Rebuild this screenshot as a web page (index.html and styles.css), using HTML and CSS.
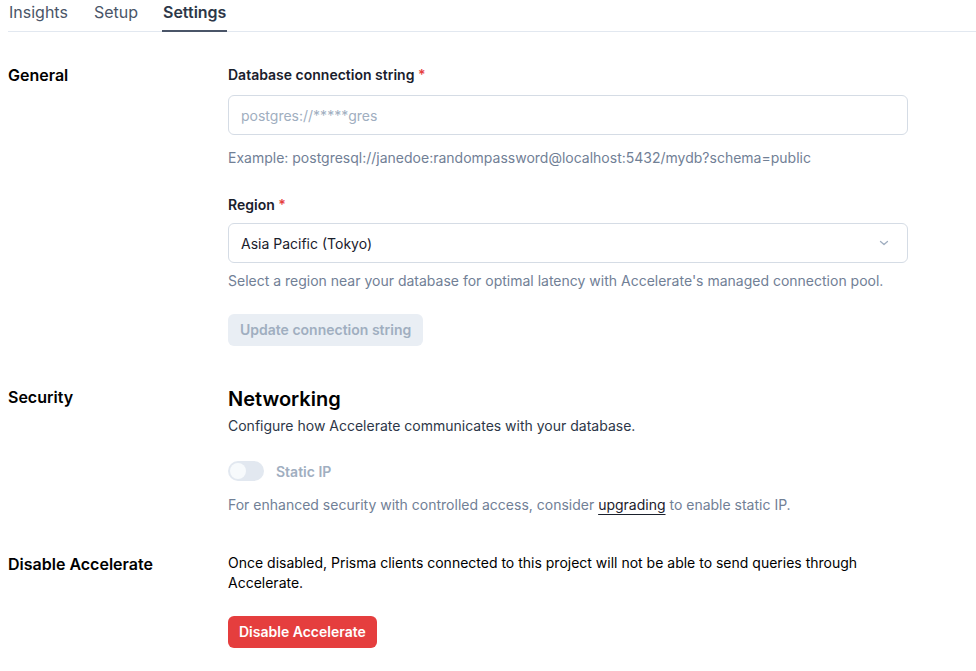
FILE: index.html
```html
<!DOCTYPE html>
<html lang="en">
<head>
<meta charset="utf-8">
<title>Settings</title>
<link rel="stylesheet" href="styles.css">
</head>
<body>
<nav class="tabs">
  <a class="tab">Insights</a>
  <a class="tab">Setup</a>
  <a class="tab active">Settings</a>
</nav>
<main class="content">
  <section class="section general">
    <h2 class="section-title">General</h2>
    <div class="section-body">
      <label class="field-label">Database connection string <span class="req">*</span></label>
      <input class="text-input" type="text" placeholder="postgres://*****gres">
      <p class="help">Example: postgresql://janedoe:randompassword@localhost:5432/mydb?schema=public</p>
      <label class="field-label region-label">Region <span class="req">*</span></label>
      <div class="select">
        <span>Asia Pacific (Tokyo)</span>
        <svg class="chev" width="12" height="12" viewBox="0 0 12 12"><path d="M2.5 4.5 L6 7.5 L9.5 4.5" fill="none" stroke="#a0aec0" stroke-width="1.3" stroke-linecap="round" stroke-linejoin="round"/></svg>
      </div>
      <p class="help help-tight">Select a region near your database for optimal latency with Accelerate's managed connection pool.</p>
      <button class="btn btn-disabled" disabled>Update connection string</button>
    </div>
  </section>
  <section class="section security">
    <h2 class="section-title">Security</h2>
    <div class="section-body">
      <h3 class="heading">Networking</h3>
      <p class="desc">Configure how Accelerate communicates with your database.</p>
      <div class="toggle-row">
        <span class="toggle"><span class="knob"></span></span>
        <span class="toggle-label">Static IP</span>
      </div>
      <p class="help note">For enhanced security with controlled access, consider <a class="link">upgrading</a> to enable static IP.</p>
    </div>
  </section>
  <section class="section danger">
    <h2 class="section-title">Disable Accelerate</h2>
    <div class="section-body">
      <p class="desc dark">Once disabled, Prisma clients connected to this project will not be able to send queries through Accelerate.</p>
      <button class="btn btn-red">Disable Accelerate</button>
    </div>
  </section>
</main>
</body>
</html>
```

FILE: styles.css
```css
* { box-sizing: border-box; }
html, body { margin: 0; padding: 0; background: #fff; }
body {
  font-family: Inter, "Noto Sans", sans-serif;
  color: #1a202c;
  padding: 0 0 0 8px;
}
.tabs {
  display: flex;
  gap: 25px;
  border-bottom: 1px solid #e2e8f0;
  height: 32px;
}
.tab {
  font-size: 16px;
  line-height: 24px;
  color: #4a5568;
  padding: 0 0 6px 1px;
  border-bottom: 2px solid transparent;
  margin-bottom: -1px;
}
.tab.active {
  color: #2d3748;
  font-weight: 600;
  border-bottom-color: #4a5568;
  padding-right: 1px;
  margin-left: -1px;
}
.content { padding-top: 32px; }
.section {
  display: grid;
  grid-template-columns: 220px 680px;
}
.section-title {
  margin: 0;
  font-size: 16px;
  line-height: 24px;
  font-weight: 600;
  color: #000;
}
.general .section-title { margin-top: -1px; }
.section-body { display: flex; flex-direction: column; align-items: flex-start; }
.field-label {
  font-size: 14px;
  line-height: 20px;
  font-weight: 600;
  color: #1a202c;
  margin: 1px 0 10px;
}
.region-label { margin-top: 27px; margin-bottom: 8px; }
.req { color: #e53e3e; }
.text-input {
  width: 680px;
  height: 40px;
  border: 1px solid #d5dce5;
  border-radius: 6px;
  padding: 0 12px;
  font-family: inherit;
  font-size: 14px;
  color: #1a202c;
  outline: none;
}
.text-input::placeholder { color: #a0aec0; }
.help {
  margin: 13px 0 0;
  font-size: 14px;
  line-height: 20px;
  color: #718096;
}
.help-tight { margin-top: 8px; }
.select {
  width: 680px;
  height: 40px;
  border: 1px solid #d5dce5;
  border-radius: 6px;
  padding: 0 17px 0 12px;
  display: flex;
  align-items: center;
  justify-content: space-between;
  font-size: 14px;
  color: #1a202c;
}
.btn {
  font-family: inherit;
  font-size: 14px;
  font-weight: 600;
  line-height: 20px;
  height: 32px;
  padding: 0 12px;
  border: none;
  border-radius: 6px;
}
.btn-disabled {
  margin-top: 23px;
  background: #e9eef4;
  color: #a0aec0;
}
.security { margin-top: 39px; }
.security .section-title { margin-top: 0; }
.heading {
  margin: 0;
  font-size: 20px;
  line-height: 28px;
  font-weight: 600;
  color: #000;
}
.desc {
  margin: 3px 0 0;
  font-size: 14px;
  line-height: 20px;
  color: #2d3748;
}
.toggle-row {
  display: flex;
  align-items: center;
  gap: 12px;
  margin-top: 25px;
  height: 20px;
}
.toggle {
  width: 36px;
  height: 20px;
  border-radius: 10px;
  background: #e2e8f0;
  padding: 2px;
  display: flex;
}
.knob {
  width: 16px;
  height: 16px;
  border-radius: 50%;
  background: #f7fafc;
}
.toggle-label {
  font-size: 14px;
  font-weight: 600;
  color: #a0aec0;
}
.note { margin-top: 14px; }
.link {
  color: #1a202c;
  text-decoration: underline;
  text-underline-offset: 4px;
}
.danger { margin-top: 38px; }
.danger .section-title { margin-top: -1px; }
.desc.dark { margin-top: 0; color: #000; width: 640px; }
.btn-red {
  margin-top: 23px;
  padding: 0 11px;
  background: #e53e3e;
  color: #fff;
}
```
